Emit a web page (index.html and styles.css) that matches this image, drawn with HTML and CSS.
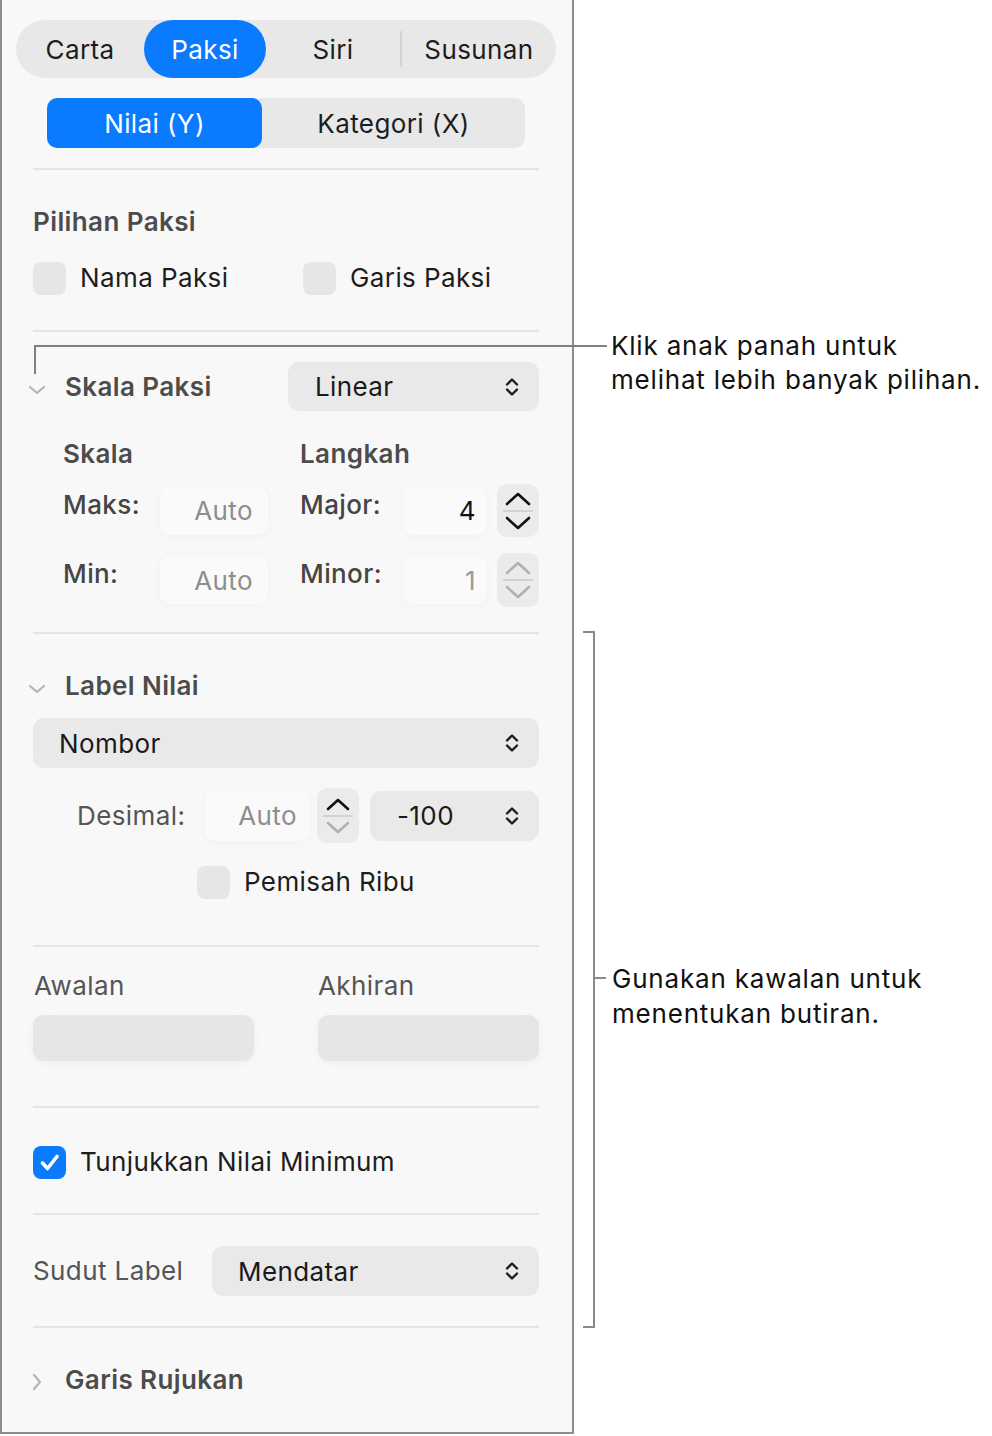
FILE: index.html
```html
<html>
<head>
<link rel="stylesheet" href="styles.css">
</head>
<body>
<div class="page">

<div class="panel">

	<div class="tabs">
		<span class="tab tab-carta">Carta</span>
		<span class="tab tab-paksi tab-on">Paksi</span>
		<span class="tab tab-siri">Siri</span>
		<span class="tab-sep"></span>
		<span class="tab tab-susunan">Susunan</span>
	</div>

	<div class="subtabs">
		<span class="sub sub-on">Nilai (Y)</span>
		<span class="sub">Kategori (X)</span>
	</div>

	<div class="rule r20"></div>

	<div class="head m35">Pilihan Paksi</div>
	<div class="checks m22">
		<label class="check check-nama"><span class="box"></span>Nama Paksi</label>
		<label class="check"><span class="box"></span>Garis Paksi</label>
	</div>

	<div class="rule r35"></div>

	<div class="disclose m30">
		<svg class="chev chev-down" width="18" height="10" viewBox="0 0 18 10"><path d="M2 2 L9 8 L16 2"/></svg>
		<span class="head">Skala Paksi</span>
		<div class="popup popup-linear">
			<span>Linear</span>
			<svg class="updown" width="14" height="20" viewBox="0 0 14 20"><path d="M2 7.5 L7 2.5 L12 7.5 M2 12.5 L7 17.5 L12 12.5"/></svg>
		</div>
	</div>

	<div class="scale-heads m26">
		<span class="head col1">Skala</span>
		<span class="head">Langkah</span>
	</div>

	<div class="scale-row m13">
		<div class="col1">
			<span class="lbl lbl-scale">Maks:</span>
			<span class="field field-scale">Auto</span>
		</div>
		<div class="col2">
			<span class="lbl lbl-step">Major:</span>
			<span class="field field-step on">4</span>
			<div class="stepper">
				<svg class="arrow" width="26" height="14" viewBox="0 0 26 14"><path d="M2 12 L13 2 L24 12"/></svg>
				<span class="stepper-line"></span>
				<svg class="arrow" width="26" height="14" viewBox="0 0 26 14"><path d="M2 2 L13 12 L24 2"/></svg>
			</div>
		</div>
	</div>

	<div class="scale-row row2 m16">
		<div class="col1">
			<span class="lbl lbl-scale">Min:</span>
			<span class="field field-scale">Auto</span>
		</div>
		<div class="col2">
			<span class="lbl lbl-step">Minor:</span>
			<span class="field field-step">1</span>
			<div class="stepper off">
				<svg class="arrow" width="26" height="14" viewBox="0 0 26 14"><path d="M2 12 L13 2 L24 12"/></svg>
				<span class="stepper-line"></span>
				<svg class="arrow" width="26" height="14" viewBox="0 0 26 14"><path d="M2 2 L13 12 L24 2"/></svg>
			</div>
		</div>
	</div>

	<div class="rule r25"></div>

	<div class="disclose disclose-text m35">
		<svg class="chev chev-down" width="18" height="10" viewBox="0 0 18 10"><path d="M2 2 L9 8 L16 2"/></svg>
		<span class="head">Label Nilai</span>
	</div>

	<div class="popup popup-wide m15">
		<span>Nombor</span>
		<svg class="updown" width="14" height="20" viewBox="0 0 14 20"><path d="M2 7.5 L7 2.5 L12 7.5 M2 12.5 L7 17.5 L12 12.5"/></svg>
	</div>

	<div class="dec-row m20">
		<span class="lbl-plain">Desimal:</span>
		<span class="field field-dec">Auto</span>
		<div class="stepper stepper-dec">
			<svg class="arrow" width="24" height="13" viewBox="0 0 24 13"><path d="M2 11 L12 2 L22 11"/></svg>
			<span class="stepper-line"></span>
			<svg class="arrow arrow-off" width="24" height="13" viewBox="0 0 24 13"><path d="M2 2 L12 11 L22 2"/></svg>
		</div>
		<div class="popup popup-dec">
			<span>-100</span>
			<svg class="updown" width="14" height="20" viewBox="0 0 14 20"><path d="M2 7.5 L7 2.5 L12 7.5 M2 12.5 L7 17.5 L12 12.5"/></svg>
		</div>
	</div>

	<div class="checks checks-ribu m22">
		<label class="check"><span class="box"></span>Pemisah Ribu</label>
	</div>

	<div class="rule r46"></div>

	<div class="affix-heads m22">
		<span class="lbl-plain">Awalan</span>
		<span class="lbl-plain">Akhiran</span>
	</div>
	<div class="affix-fields m12">
		<span class="affix"></span>
		<span class="affix"></span>
	</div>

	<div class="rule r45"></div>

	<div class="checks m37">
		<label class="check"><span class="box box-on"><svg width="33" height="33" viewBox="0 0 33 33"><path d="M9.5 17 L14.5 22.5 L24 10.5"/></svg></span>Tunjukkan Nilai Minimum</label>
	</div>

	<div class="rule r34"></div>

	<div class="angle-row m31">
		<span class="lbl-plain">Sudut Label</span>
		<div class="popup popup-angle">
			<span>Mendatar</span>
			<svg class="updown" width="14" height="20" viewBox="0 0 14 20"><path d="M2 7.5 L7 2.5 L12 7.5 M2 12.5 L7 17.5 L12 12.5"/></svg>
		</div>
	</div>

	<div class="rule r30"></div>

	<div class="disclose disclose-text m35">
		<svg class="chev chev-right" width="18" height="18" viewBox="0 0 18 18"><path d="M6 2 L12 9 L6 16"/></svg>
		<span class="head">Garis Rujukan</span>
	</div>

</div>

<!-- callouts -->
<div class="lead-top"></div>
<div class="note note-top">Klik anak panah untuk<br>melihat lebih banyak pilihan.</div>

<div class="bracket"></div>
<div class="bracket-tick"></div>
<div class="note note-mid">Gunakan kawalan untuk<br>menentukan butiran.</div>

</div>
</body>
</html>
```

FILE: styles.css
```css
body{
	margin:0;
	background:#ffffff;
	font-family:"Inter","Liberation Sans",sans-serif;
	font-size:26px;
	letter-spacing:0.4px;
	color:#1d1d1d;
}
.page{
	position:relative;
	width:992px;
	height:1436px;
	overflow:hidden;
}
.panel{
	width:506px;
	height:1432px;
	padding:0 33px 0 31px;
	border:2px solid #8c8c8c;
	border-top:0;
	background:#f8f8f8;
	overflow:hidden;
}

/* spacing */
.m12{margin-top:12px;}
.m13{margin-top:13px;}
.m15{margin-top:15px;}
.m16{margin-top:16px;}
.m20{margin-top:20px;}
.m22{margin-top:22px;}
.m26{margin-top:26px;}
.m30{margin-top:30px;}
.m31{margin-top:31px;}
.m35{margin-top:35px;}
.m37{margin-top:37px;}

.rule{
	height:2px;
	background:#e4e4e4;
}
.r20{margin-top:20px;}
.r25{margin-top:25px;}
.r30{margin-top:30px;}
.r34{margin-top:34px;}
.r35{margin-top:35px;}
.r45{margin-top:45px;}
.r46{margin-top:46px;}

/* tabs */
.tabs{
	display:flex;
	width:540px;
	height:58px;
	margin:20px 0 0 -17px;
	border-radius:29px;
	background:#e8e8e8;
}
.tab{
	display:flex;
	align-items:center;
	justify-content:center;
	border-radius:29px;
}
.tab-carta{width:128px;}
.tab-paksi{width:122px;}
.tab-siri{width:134px;}
.tab-susunan{width:154px;}
.tab-on{
	background:#0a7aff;
	color:#ffffff;
}
.tab-sep{
	width:2px;
	height:36px;
	align-self:center;
	background:#d3d3d3;
}

.subtabs{
	display:flex;
	width:478px;
	height:50px;
	margin:20px 0 0 14px;
	border-radius:10px;
	background:#e8e8e8;
}
.sub{
	flex:1;
	display:flex;
	align-items:center;
	justify-content:center;
	border-radius:10px;
}
.sub-on{
	flex:0 0 215px;
	background:#0a7aff;
	color:#ffffff;
}

/* text */
.head{
	line-height:34px;
	font-weight:600;
	color:#4c4c4c;
}
.lbl{
	line-height:34px;
	font-weight:500;
	color:#454545;
	margin-bottom:12px;
}
.lbl-plain{
	line-height:34px;
	color:#555555;
}

/* checkboxes */
.checks{
	display:flex;
	height:34px;
}
.checks-ribu{
	padding-left:164px;
}
.check{
	display:flex;
	align-items:center;
	gap:14px;
	line-height:34px;
}
.check-nama{
	width:270px;
}
.box{
	width:33px;
	height:33px;
	border-radius:8px;
	background:#e6e6e6;
}
.box-on{
	background:#0a7aff;
}
.box-on svg{
	display:block;
}
.box-on path{
	fill:none;
	stroke:#ffffff;
	stroke-width:3.6;
	stroke-linecap:round;
	stroke-linejoin:round;
}

/* disclosure rows */
.disclose{
	display:flex;
	align-items:center;
	height:49px;
}
.disclose-text{
	height:34px;
}
.chev{
	flex:none;
	margin:6px 19px 0 -5px;
}
.chev path{
	fill:none;
	stroke:#b5b5b5;
	stroke-width:2.2;
	stroke-linecap:round;
	stroke-linejoin:round;
}
.chev-right{
	margin-top:4px;
}

/* popups */
.popup{
	display:flex;
	align-items:center;
	justify-content:space-between;
	box-sizing:border-box;
	height:50px;
	padding:0 20px 0 27px;
	border-radius:11px;
	background:#e9e9e9;
	color:#1a1a1a;
}
.popup-linear{
	width:251px;
	height:49px;
	margin-left:auto;
}
.popup-wide{
	padding-left:26px;
}
.popup-dec{
	width:169px;
	margin-left:11px;
}
.popup-angle{
	width:327px;
	margin-left:auto;
	padding-left:26px;
}
.updown path{
	fill:none;
	stroke:#1d1d1d;
	stroke-width:2.4;
	stroke-linecap:round;
	stroke-linejoin:round;
}

/* scale block */
.scale-heads{
	display:flex;
	padding-left:30px;
}
.scale-row{
	display:flex;
	height:53px;
	padding-left:30px;
}
.row2{
	height:54px;
}
.col1{
	display:flex;
	align-items:center;
	width:237px;
}
.col2{
	display:flex;
	align-items:center;
	flex:1;
}
.lbl-scale{width:97px;}
.lbl-step{width:103px;}

.field{
	display:flex;
	align-items:center;
	justify-content:flex-end;
	box-sizing:border-box;
	height:48px;
	border-radius:10px;
	background:#fafafa;
	box-shadow:0 1px 8px rgba(0,0,0,0.035);
	color:#8e8e8e;
	padding-right:15px;
}
.field-scale{width:108px;}
.field-step{
	width:84px;
	padding-right:11px;
	color:#9a9a9a;
}
.field-step.on{
	color:#111111;
}

.stepper{
	display:flex;
	flex-direction:column;
	align-items:center;
	justify-content:center;
	box-sizing:border-box;
	width:42px;
	height:100%;
	margin-left:10px;
	border-radius:10px;
	background:#ebebeb;
}
.stepper-line{
	width:30px;
	height:2px;
	margin:4px 0;
	background:#d2d2d2;
}
.arrow{
	display:block;
}
.arrow path{
	fill:none;
	stroke:#111111;
	stroke-width:2.6;
	stroke-linecap:round;
	stroke-linejoin:round;
}
.stepper.off .arrow path,
.arrow-off path{
	stroke:#b0b0b0;
}

/* decimal row */
.dec-row{
	display:flex;
	align-items:center;
	height:55px;
	padding-left:44px;
}
.dec-row .lbl-plain{
	width:128px;
}
.field-dec{
	width:105px;
	height:50px;
	padding-right:13px;
}
.stepper-dec{
	margin-left:7px;
}

/* affixes */
.affix-heads,
.affix-fields{
	display:flex;
	justify-content:space-between;
}
.affix-heads span{
	width:221px;
	padding-left:1px;
}
.affix{
	width:221px;
	height:46px;
	border-radius:11px;
	background:#e6e6e6;
	box-shadow:0 2px 8px rgba(0,0,0,0.04);
}

.angle-row{
	display:flex;
	align-items:center;
	height:50px;
}

/* callouts */
.lead-top{
	position:absolute;
	left:34px;
	top:345px;
	width:571px;
	height:27px;
	border-top:2px solid #7f7f7f;
	border-left:2px solid #7f7f7f;
}
.note{
	position:absolute;
	left:611px;
	color:#111111;
	line-height:34px;
	letter-spacing:0.8px;
}
.note-top{
	top:329px;
}
.note-mid{
	top:961px;
	left:612px;
	line-height:35px;
}
.bracket{
	position:absolute;
	left:583px;
	top:631px;
	width:10px;
	height:693px;
	border:2px solid #8a8a8a;
	border-left:0;
}
.bracket-tick{
	position:absolute;
	left:595px;
	top:977px;
	width:11px;
	height:2px;
	background:#8a8a8a;
}
```
